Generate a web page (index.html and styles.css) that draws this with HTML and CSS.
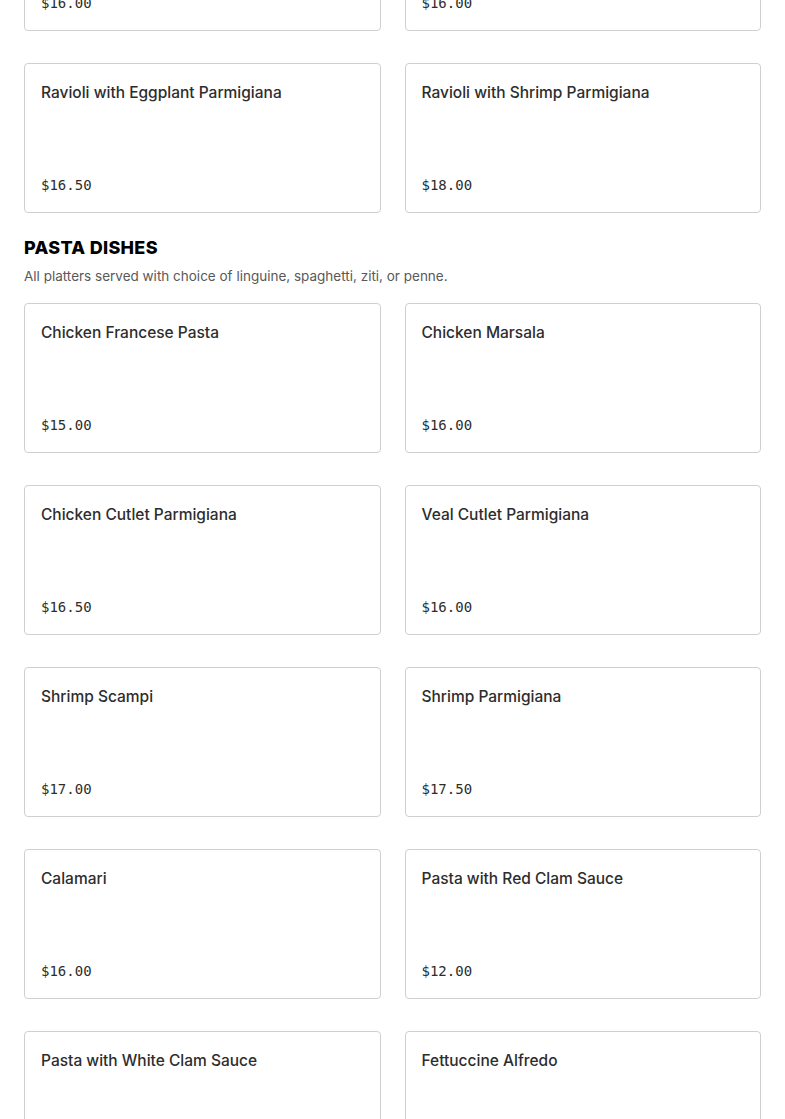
FILE: index.html
```html
<!DOCTYPE html>
<html lang="en">
<head>
  <meta charset="UTF-8">
  <meta name="viewport" content="width=device-width, initial-scale=1.0">
  <title>Menu</title>
  <link rel="stylesheet" href="styles.css">
</head>
<body>
  <div class="menu">

    <!-- Ravioli (scrolled partly out of view) -->
    <section class="section section-first">
      <div class="grid">
        <div class="card">
          <div class="card-title">Ravioli with Meat Sauce</div>
          <div class="card-price">$16.00</div>
        </div>
        <div class="card">
          <div class="card-title">Ravioli with Marinara Sauce</div>
          <div class="card-price">$16.00</div>
        </div>
        <div class="card">
          <div class="card-title">Ravioli with Eggplant Parmigiana</div>
          <div class="card-price">$16.50</div>
        </div>
        <div class="card">
          <div class="card-title">Ravioli with Shrimp Parmigiana</div>
          <div class="card-price">$18.00</div>
        </div>
      </div>
    </section>

    <!-- Pasta Dishes -->
    <section class="section">
      <h2 class="section-title">PASTA DISHES</h2>
      <p class="section-desc">All platters served with choice of linguine, spaghetti, ziti, or penne.</p>
      <div class="grid">
        <div class="card">
          <div class="card-title">Chicken Francese Pasta</div>
          <div class="card-price">$15.00</div>
        </div>
        <div class="card">
          <div class="card-title">Chicken Marsala</div>
          <div class="card-price">$16.00</div>
        </div>
        <div class="card">
          <div class="card-title">Chicken Cutlet Parmigiana</div>
          <div class="card-price">$16.50</div>
        </div>
        <div class="card">
          <div class="card-title">Veal Cutlet Parmigiana</div>
          <div class="card-price">$16.00</div>
        </div>
        <div class="card">
          <div class="card-title">Shrimp Scampi</div>
          <div class="card-price">$17.00</div>
        </div>
        <div class="card">
          <div class="card-title">Shrimp Parmigiana</div>
          <div class="card-price">$17.50</div>
        </div>
        <div class="card">
          <div class="card-title">Calamari</div>
          <div class="card-price">$16.00</div>
        </div>
        <div class="card">
          <div class="card-title">Pasta with Red Clam Sauce</div>
          <div class="card-price">$12.00</div>
        </div>
        <div class="card">
          <div class="card-title">Pasta with White Clam Sauce</div>
          <div class="card-price">$12.00</div>
        </div>
        <div class="card">
          <div class="card-title">Fettuccine Alfredo</div>
          <div class="card-price">$13.00</div>
        </div>
      </div>
    </section>

  </div>
</body>
</html>
```

FILE: styles.css
```css
body {
  margin: 0;
  background: #fff;
  font-family: Inter, "Noto Sans", sans-serif;
  color: #2d2d2d;
  overflow: hidden;
}

.menu {
  padding: 0 24px;
}

.section {
  margin-top: 23px;
}

.section-first {
  margin-top: -119px;
}

.section-title {
  margin: 0 0 6px;
  font-size: 18px;
  line-height: 24px;
  font-weight: 800;
  color: #000;
  letter-spacing: 0.3px;
}

.section-desc {
  margin: 0 0 17px;
  font-size: 13.5px;
  line-height: 20px;
  color: #595959;
}

.grid {
  display: grid;
  grid-template-columns: 1fr 1fr;
  column-gap: 24px;
  row-gap: 32px;
}

.card {
  height: 150px;
  box-sizing: border-box;
  padding: 17px 16px;
  border: 1px solid #cfcfcf;
  border-radius: 4px;
  display: flex;
  flex-direction: column;
  justify-content: space-between;
}

.card-title {
  font-size: 15.5px;
  line-height: 24px;
  font-weight: 500;
  color: #2d2d2d;
}

.card-price {
  font-family: "DejaVu Sans Mono", "Liberation Mono", monospace;
  font-size: 14px;
  line-height: 20px;
  font-weight: 500;
  color: #2d2d2d;
}
```
